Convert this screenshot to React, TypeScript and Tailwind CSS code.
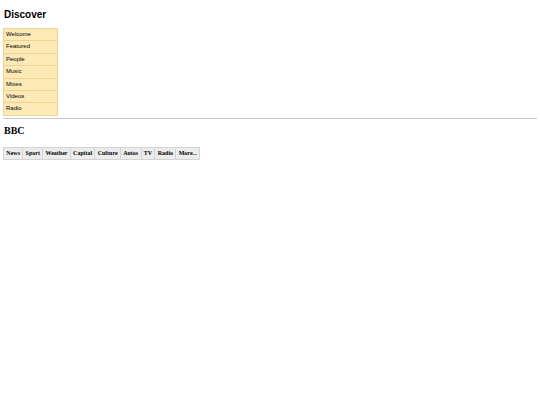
const menu = ["Welcome", "Featured", "People", "Music", "Mixes", "Videos", "Radio"];
const tabs = ["News", "Sport", "Weather", "Capital", "Culture", "Autos", "TV", "Radio", "More..."];

export default function App() {
  return (
    <div className="min-h-[405px] bg-white px-[3px] text-black">
      <h2 className="pt-[9px] pl-px font-['Liberation_Sans',Arial,sans-serif] text-[10px] leading-[12px] font-bold">
        Discover
      </h2>

      <ul className="mt-[7px] w-[55px] border-t border-[#ecd594] font-['Liberation_Sans',Arial,sans-serif] text-[6px]">
        {menu.map((m) => (
          <li
            key={m}
            className="h-[12.4px] border-x border-b border-[#ecd594] bg-[#fde9b6] pl-[2px] leading-[11.4px]"
          >
            {m}
          </li>
        ))}
      </ul>

      <hr className="mt-[2px] w-[534px] border-t border-[#c8c8c8]" />

      <h2 className="mt-[6px] pl-px font-['Liberation_Serif','Times_New_Roman',serif] text-[10px] leading-[12px] font-bold">
        BBC
      </h2>

      <div className="mt-[10px] flex w-max border border-[#d4d4d4] bg-[#ececec] font-['Liberation_Serif','Times_New_Roman',serif] text-[6px] font-bold">
        {tabs.map((t, i) => (
          <span
            key={t}
            className={
              "h-[11px] px-[2.3px] leading-[11px] " + (i > 0 ? "border-l border-[#d4d4d4]" : "")
            }
          >
            {t}
          </span>
        ))}
      </div>
    </div>
  );
}
